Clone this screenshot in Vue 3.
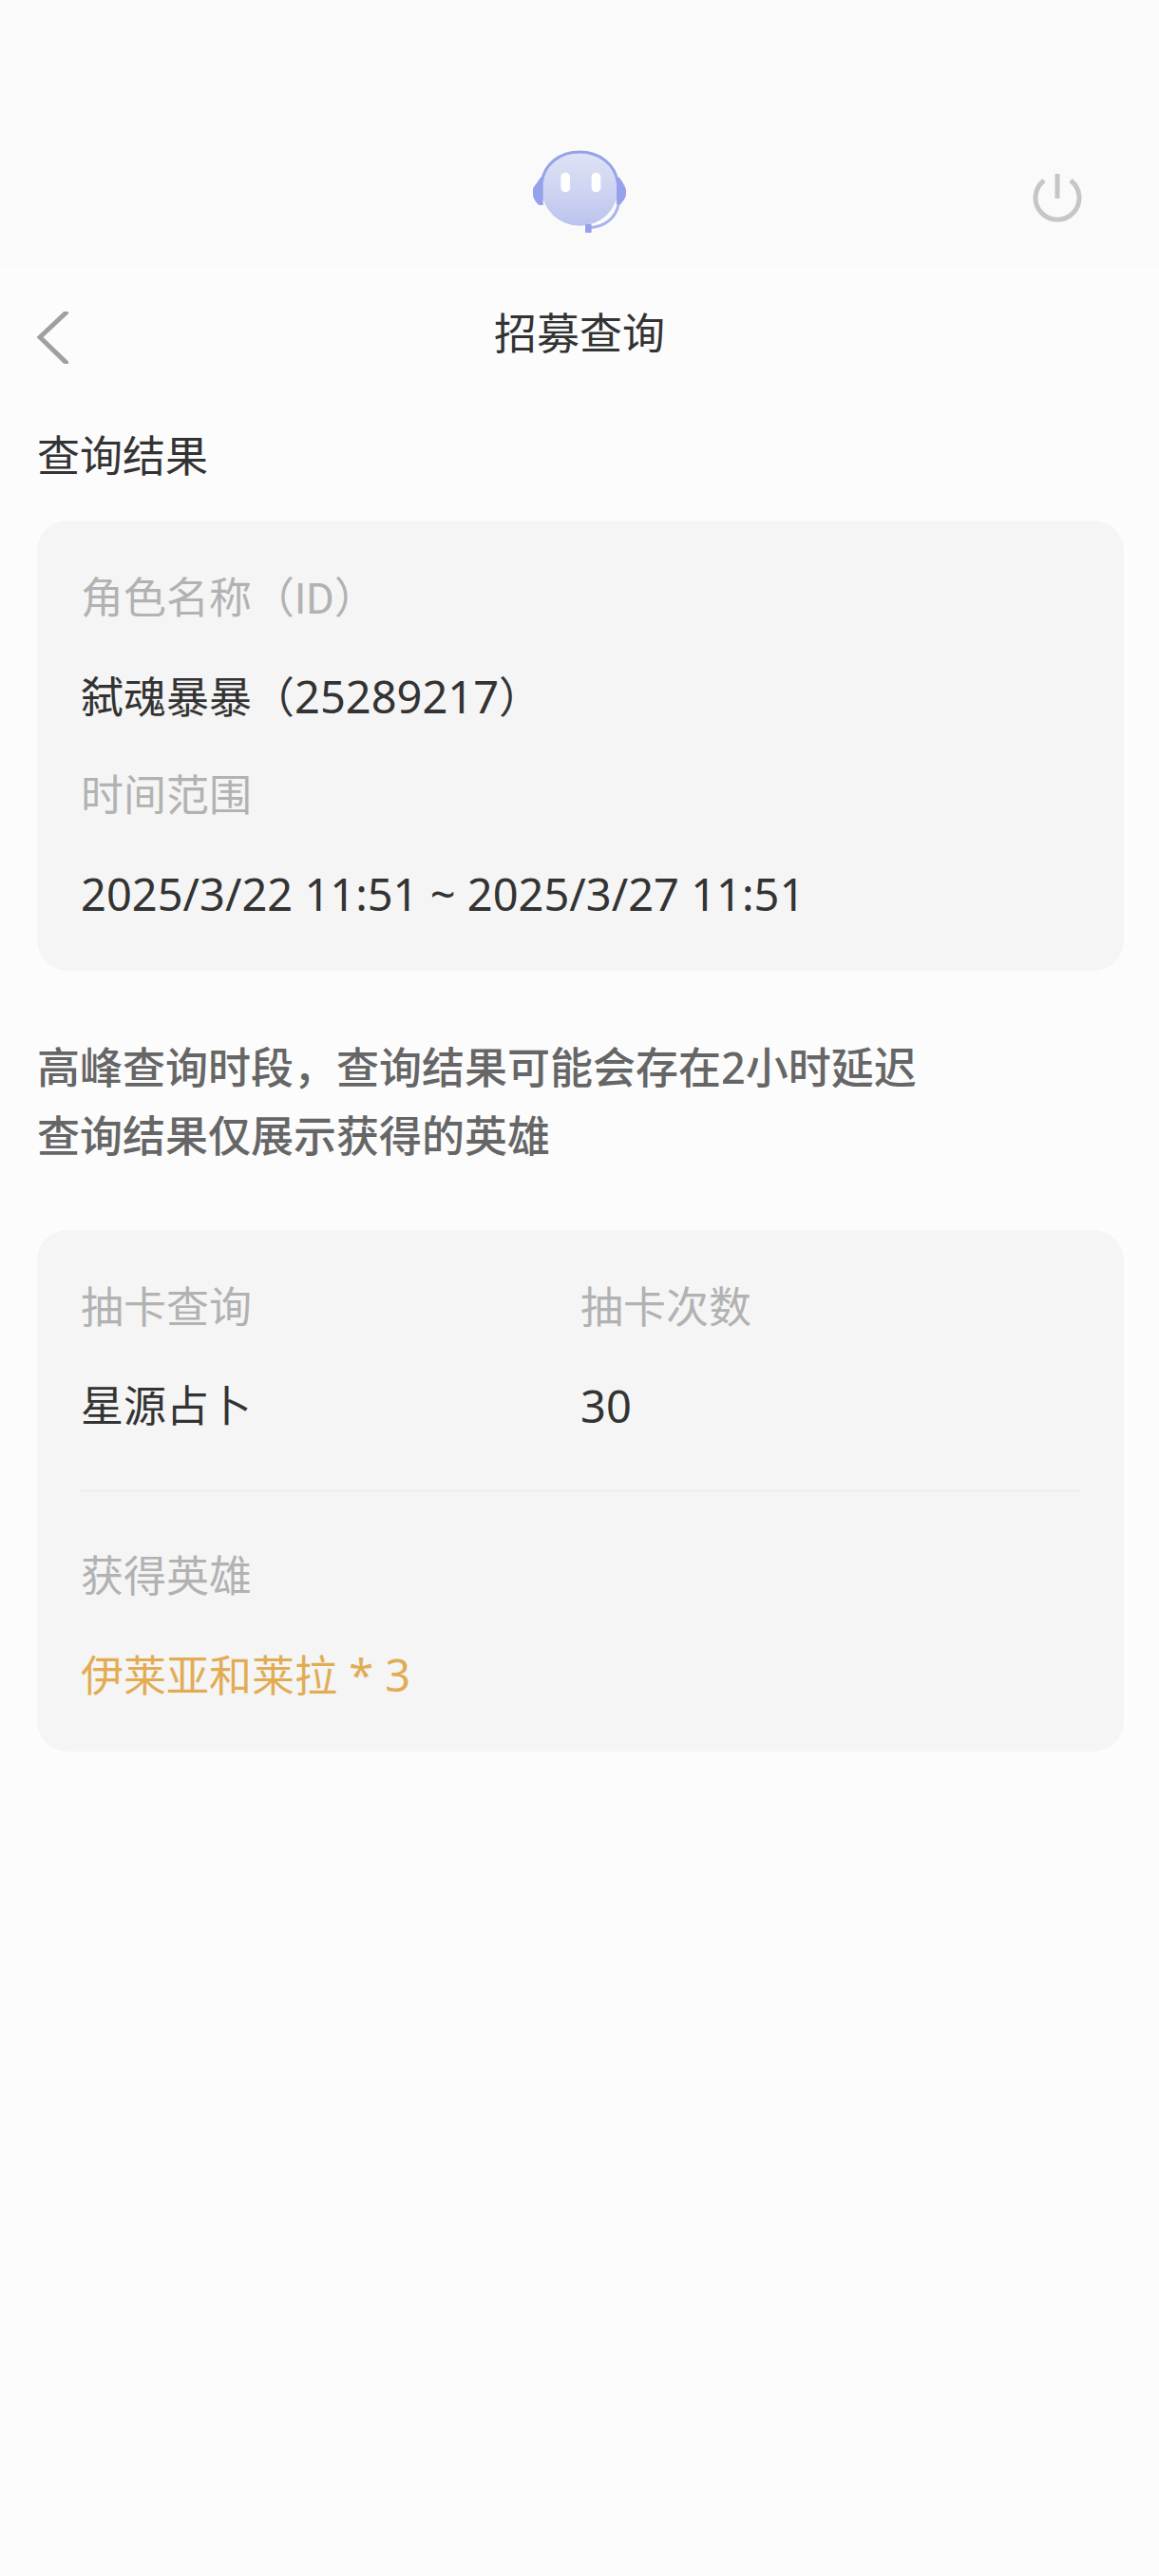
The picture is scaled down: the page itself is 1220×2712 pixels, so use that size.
<script setup>
const role = { name: '弑魂暴暴', id: '25289217' }
const range = '2025/3/22 11:51 ~ 2025/3/27 11:51'
const notices = ['高峰查询时段，查询结果可能会存在2小时延迟', '查询结果仅展示获得的英雄']
const draw = { pool: '星源占卜', times: 30 }
const heroes = [{ name: '伊莱亚和莱拉', count: 3 }]
</script>

<template>
  <div class="page">
    <header class="topbar">
      <button class="icon-btn bot" type="button" aria-label="客服">
        <svg viewBox="63 51 294 264" width="98" height="88">
          <defs>
            <linearGradient id="face" x1="0" y1="0" x2="0" y2="1">
              <stop offset="0" stop-color="#dfe3f6" />
              <stop offset="0.5" stop-color="#cfd5f2" />
              <stop offset="1" stop-color="#bac3ee" />
            </linearGradient>
          </defs>
          <ellipse cx="211" cy="176" rx="121" ry="117" fill="url(#face)" />
          <path d="M91 156 C98 98 148 60 210 60 C273 60 323 98 331 158" fill="none" stroke="#97a3e8" stroke-width="9" />
          <path d="M334 222 C326 268 290 298 240 299" fill="none" stroke="#fafafa" stroke-width="22" />
          <path d="M334 222 C326 268 290 298 240 299" fill="none" stroke="#a9b4ee" stroke-width="9" />
          <path d="M95 140 V228 H82 C74 220 63 208 63 192 V178 C63 170 78 156 87 140 Z" fill="#95a1ea" />
          <path d="M327 140 V226 H339 C346 216 357 206 357 192 V180 C357 172 346 156 336 140 Z" fill="#95a1ea" />
          <rect x="228" y="288" width="20" height="27" rx="3" fill="#95a1ea" />
          <rect x="151" y="125" width="29" height="62" rx="14" fill="#fff" />
          <rect x="248" y="125" width="29" height="62" rx="14" fill="#fff" />
        </svg>
      </button>
      <button class="icon-btn power" type="button" aria-label="退出">
        <svg viewBox="0 0 52 52" width="52" height="52" fill="none" stroke="#c6c6c6" stroke-width="5">
          <path d="M12 7 A23 23 0 1 0 40 7" />
          <path d="M26 0 V26" />
        </svg>
      </button>
    </header>

    <nav class="titlebar">
      <button class="icon-btn back" type="button" aria-label="返回">
        <svg viewBox="0 0 33 55" width="33" height="55" fill="none" stroke="#a0a0a0" stroke-width="5">
          <path d="M35 -3 L3 27 L35 58" />
        </svg>
      </button>
      <h1>招募查询</h1>
    </nav>

    <main>
      <h2>查询结果</h2>

      <dl class="card">
        <dt>角色名称（<span class="latin">ID</span>）</dt>
        <dd>{{ role.name }}（<span class="num">{{ role.id }}</span>）</dd>
        <dt>时间范围</dt>
        <dd class="num">{{ range }}</dd>
      </dl>

      <div class="notice">
        <p v-for="line in notices" :key="line">{{ line }}</p>
      </div>

      <section class="card">
        <div class="columns">
          <dl>
            <dt>抽卡查询</dt>
            <dd>{{ draw.pool }}</dd>
          </dl>
          <dl>
            <dt>抽卡次数</dt>
            <dd class="num">{{ draw.times }}</dd>
          </dl>
        </div>
        <hr />
        <dl>
          <dt>获得英雄</dt>
          <dd v-for="hero in heroes" :key="hero.name" class="hero">
            {{ hero.name }}<span class="num">&nbsp;*&nbsp;{{ hero.count }}</span>
          </dd>
        </dl>
      </section>
    </main>
  </div>
</template>

<style>
body {
  margin: 0;
  background: #fcfcfc;
}
</style>

<style scoped>
.page {
  min-height: 100vh;
  background: #fcfcfc;
  color: #333;
  font-family: "Noto Sans", "Noto Sans CJK SC", sans-serif;
  font-size: 45px;
}

.topbar {
  display: grid;
  grid-template-columns: 1fr auto 1fr;
  align-items: start;
  padding: 157px 81px 36px;
  background: #fafafa;
}

.icon-btn {
  display: block;
  padding: 0;
  border: 0;
  background: none;
  cursor: pointer;
}

.icon-btn svg {
  display: block;
}

.bot {
  grid-column: 2;
}

.power {
  justify-self: end;
  margin-top: 26px;
}

.titlebar {
  display: grid;
  grid-template-columns: 1fr auto 1fr;
  align-items: center;
  padding: 34px 39px 0;
}

h1,
h2 {
  margin: 0;
  font-size: 45px;
  font-weight: 400;
  line-height: 72px;
}

.back {
  padding-top: 8px;
}

main {
  padding: 57px 37px 40px 39px;
}

h2 {
  margin-bottom: 32px;
}

dl,
dd,
p {
  margin: 0;
}

.card {
  padding: 29px 46px;
  border-radius: 32px;
  background: #f5f5f5;
}

dt,
dd {
  height: 104px;
  line-height: 104px;
  white-space: nowrap;
}

dt {
  color: #b2b2b2;
}

.num {
  font-size: 47px;
}

.latin {
  font-family: Roboto, sans-serif;
}

.notice {
  margin: 66px 0 63px;
  color: #666;
  font-weight: 500;
  line-height: 72px;
}

.columns {
  display: grid;
  grid-template-columns: 1fr 1fr;
}

hr {
  height: 3px;
  margin: 36px 0;
  border: 0;
  background: #eee;
}

.hero {
  color: #e2ac55;
}
</style>
